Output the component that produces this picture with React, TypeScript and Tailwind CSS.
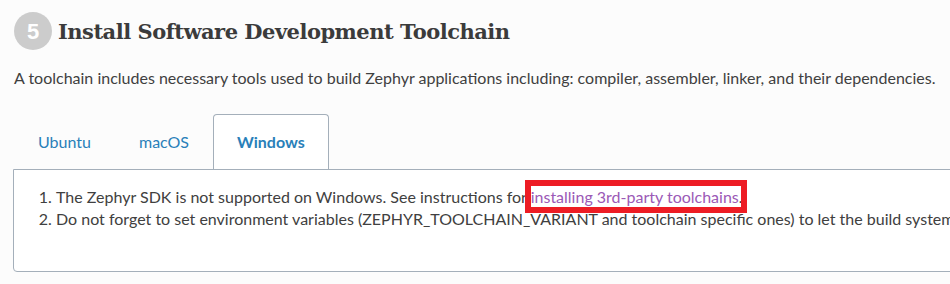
const tabs = ["Ubuntu", "macOS", "Windows"];

export default function App() {
  const active = "Windows";

  return (
    <div className="w-[950px] h-[284px] overflow-hidden bg-[#fcfcfc] text-[#404040] font-['Lato',sans-serif]">
      {/* Step heading */}
      <div className="flex items-center gap-[6px] pl-[14px] pt-[12px]">
        <div className="w-[38px] h-[38px] rounded-full bg-[#cccccc] text-white flex items-center justify-center font-['Liberation_Sans',sans-serif] font-bold text-[22px]">
          5
        </div>
        <h2 className="font-['DejaVu_Serif',serif] font-bold text-[21px] tracking-[-0.5px] text-[#3b3b3b] leading-none">
          Install Software Development Toolchain
        </h2>
      </div>

      <p className="pl-[14px] mt-[17px] text-[16px] leading-[22px]">
        A toolchain includes necessary tools used to build Zephyr applications including: compiler, assembler, linker, and their dependencies.
      </p>

      {/* Tabs */}
      <div className="pl-[13px] mt-[25px] w-[1000px]">
        <div className="flex pl-px">
          {tabs.map((t) => (
            <div
              key={t}
              className={
                t === active
                  ? "px-[23px] h-[55px] flex items-center border border-b-0 border-[#a4afba] rounded-t-[4px] bg-white text-[#2980b9] font-bold text-[16px] -mb-px relative z-10"
                  : "px-6 h-[55px] flex items-center text-[#2980b9] text-[16px]"
              }
            >
              {t}
            </div>
          ))}
        </div>
        <div className="border border-[#a4afba] rounded-b-[4px] bg-white h-[103px] pt-[16px]">
          <ol className="list-decimal pl-[42px] text-[16px] leading-[22px] whitespace-nowrap">
            <li>
              The Zephyr SDK is not supported on Windows. See instructions for{" "}
              <span className="relative">
                <a className="text-[#9b59b6]">installing 3rd-party toolchains</a>.
                <span className="absolute -left-[6px] -right-[4px] -top-[7px] -bottom-[7px] border-[6px] border-[#ed1c24]" />
              </span>
            </li>
            <li>
              Do not forget to set environment variables (ZEPHYR_TOOLCHAIN_VARIANT and toolchain specific ones) to let the build system know where to find the toolchain programs.
            </li>
          </ol>
        </div>
      </div>
    </div>
  );
}
